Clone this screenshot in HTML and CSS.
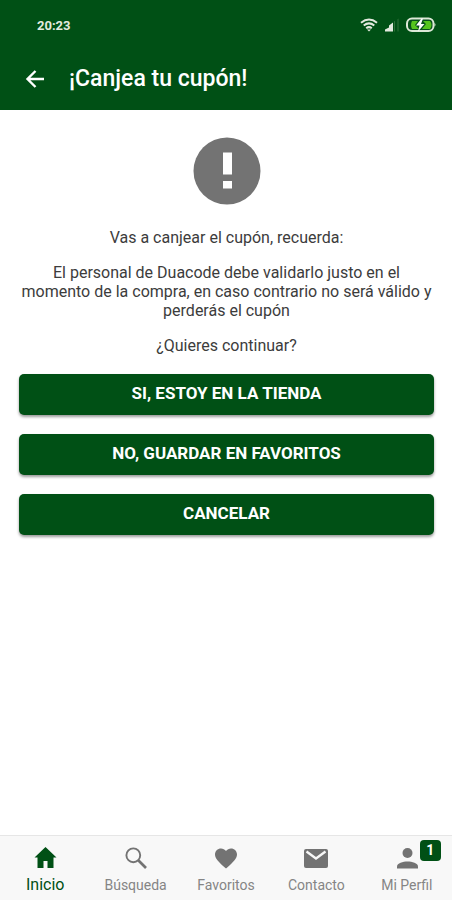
FILE: index.html
```html
<!DOCTYPE html>
<html lang="es">
<head>
<meta charset="utf-8">
<meta name="viewport" content="width=device-width, initial-scale=1">
<title>¡Canjea tu cupón!</title>
<link rel="stylesheet" href="styles.css">
</head>
<body>
<div class="app">
  <header class="header">
    <div class="status">
      <span class="clock">20:23</span>
      <div class="indicators">
        <svg width="18" height="14" viewBox="0 0 18 14" fill="none" stroke="#e3eadf" stroke-width="2" aria-hidden="true">
          <path d="M1 4.700Q9-1.700 17 4.700M3.700 7.500Q9 3.300 14.300 7.500M6.200 10.200Q9 8 11.800 10.200"/>
          <path d="M7 11.500h4l-2 2z" fill="#e3eadf" stroke="none"/>
        </svg>
        <svg width="14" height="14" viewBox="0 0 14 14" aria-hidden="true">
          <path d="M0 13.500v-2l4-2V7.500l4-3v9z" fill="#e3eadf"/>
          <path d="M9 13.500V3.500l1-.8v10.800zM12.500 13.500V1.200l1-.8v13.100z" fill="#2f703b"/>
        </svg>
        <svg width="30" height="16" viewBox="0 0 30 16" aria-hidden="true">
          <rect x="1" y="1.500" width="26.500" height="12.500" rx="5" fill="#07501a" stroke="#dce8d7" stroke-width="2"/>
          <path d="M28.500 6q2 1.700 0 3.500z" fill="#dce8d7"/>
          <path d="M6 4h6l-3 4 4 4H6q-2-4 0-8zM17 4h7q3 4 0 8h-8l4-5z" fill="#55c51d"/>
          <path d="M15.500 1.500L10 8.500h3.500L12 14.500l6.500-7.500H15l2-5.500z" fill="#fff"/>
        </svg>
      </div>
    </div>
    <div class="toolbar">
      <button class="back" type="button" aria-label="Volver">
        <svg width="20" height="20" viewBox="0 0 20 20" fill="none" stroke="#fff" stroke-width="2.400" aria-hidden="true"><path d="M19 10H3M10.500 2L2.500 10l8 8"/></svg>
      </button>
      <h1 class="title">¡Canjea tu cupón!</h1>
    </div>
  </header>

  <main class="content">
    <svg class="alert" width="68" height="68" viewBox="0 0 68 68" aria-hidden="true">
      <circle cx="34" cy="34" r="33.500" fill="#737373"/>
      <path d="M30 15.500h9v22h-9zM30 44h9v7.500h-9z" fill="#fff"/>
    </svg>
    <p>Vas a canjear el cupón, recuerda:</p>
    <p>El personal de Duacode debe validarlo justo en el momento de la compra, en caso contrario no será válido y perderás el cupón</p>
    <p>¿Quieres continuar?</p>
    <div class="actions">
      <button class="action" type="button">SI, ESTOY EN LA TIENDA</button>
      <button class="action" type="button">NO, GUARDAR EN FAVORITOS</button>
      <button class="action" type="button">CANCELAR</button>
    </div>
  </main>

  <nav class="tabs">
    <a class="tab active" href="#inicio">
      <svg class="icon" viewBox="0 0 24 24" aria-hidden="true"><path d="M12.500 1L1.500 11.500h3V22h6v-7h4v7h6V11.500h3z"/></svg>
      <span>Inicio</span>
    </a>
    <a class="tab" href="#busqueda">
      <svg class="icon" viewBox="0 0 24 24" aria-hidden="true"><g fill="none" stroke="currentColor"><circle cx="9.300" cy="9.300" r="6.900" stroke-width="1.900"/><path d="M14 14l8 8" stroke-width="2.600"/></g></svg>
      <span>Búsqueda</span>
    </a>
    <a class="tab" href="#favoritos">
      <svg class="icon" viewBox="0 0 24 24" aria-hidden="true"><path d="M12 22.500L10.500 21.200C5 16.200 1 12.800 1 8.500c0-3.400 2.600-6 6-6 1.900 0 3.800.9 5 2.400C13.200 3.400 15.100 2.500 17 2.500c3.400 0 6 2.600 6 6 0 4.300-4 7.700-9.500 12.700z"/></svg>
      <span>Favoritos</span>
    </a>
    <a class="tab" href="#contacto">
      <svg class="icon wide" viewBox="0 0 26 24" aria-hidden="true"><path d="M3 3h20q2 0 2 2v15q0 2-2 2H3q-2 0-2-2V5q0-2 2-2z"/><path d="M3.500 5.500L13 12.500l9.500-7" fill="none" stroke="#f8f8f8" stroke-width="2.300"/></svg>
      <span>Contacto</span>
    </a>
    <a class="tab" href="#perfil">
      <span class="profile">
        <svg class="icon" viewBox="0 0 24 24" aria-hidden="true"><circle cx="12.500" cy="7" r="5"/><path d="M2 22.500v-2C2 17 8 15.500 12.500 15.500S23 17 23 20.500v2z"/></svg>
        <span class="badge">1</span>
      </span>
      <span>Mi Perfil</span>
    </a>
  </nav>
</div>
</body>
</html>
```
FILE: styles.css
```css
* {
  box-sizing: border-box;
}

body {
  margin: 0;
  background: #fff;
  color: #3c3c3c;
  font-family: Roboto, "Liberation Sans", sans-serif;
  font-size: 16px;
  line-height: 19px;
}

button {
  font: inherit;
  border: 0;
  cursor: pointer;
}

.app {
  display: flex;
  flex-direction: column;
  min-height: 100vh;
}

.header {
  background: #005015;
  color: #fff;
}

.status {
  display: flex;
  align-items: center;
  justify-content: space-between;
  height: 50px;
  padding: 0 16px 0 37px;
}

.clock {
  color: #e3eadf;
  font-size: 13px;
  font-weight: 700;
}

.indicators {
  display: flex;
  align-items: center;
  gap: 7px;
}

.toolbar {
  display: flex;
  align-items: center;
  gap: 24px;
  height: 60px;
  padding: 0 25px 2px;
}

.back {
  display: flex;
  padding: 0;
  background: none;
}

.title {
  margin: 0;
  font-size: 23px;
  font-weight: 500;
  line-height: 28px;
}

.content {
  flex: 1;
  padding: 27px 18px 27px 19px;
  text-align: center;
}

.alert {
  display: block;
  margin: 0 auto 23px;
}

.content p {
  margin: 0 0 16px;
}

.actions {
  display: grid;
  gap: 19px;
  margin-top: 19px;
}

.action {
  height: 41px;
  padding: 0 0 2px;
  border-radius: 5px;
  background: #005015;
  box-shadow: 0 2px 3px rgba(0, 0, 0, 0.4);
  color: #fff;
  font-size: 17px;
  font-weight: 700;
}

.tabs {
  display: grid;
  grid-template-columns: repeat(5, 1fr);
  height: 65px;
  border-top: 1px solid #e6e6e6;
  background: #f8f8f8;
}

.tab {
  display: flex;
  flex-direction: column;
  align-items: center;
  justify-content: flex-end;
  gap: 7px;
  padding-bottom: 7px;
  color: #737373;
  font-size: 14px;
  line-height: 16px;
  text-decoration: none;
}

.tab span {
  color: #858585;
}

.tab.active,
.tab.active span {
  color: #005015;
  font-size: 16px;
}

.icon {
  display: block;
  width: 24px;
  height: 24px;
  fill: currentColor;
}

.profile .icon {
  color: #737373;
}

.wide {
  width: 26px;
}

.profile {
  position: relative;
}

.tab .badge {
  position: absolute;
  top: -6px;
  left: 25px;
  width: 21px;
  height: 21px;
  border-radius: 4px;
  background: #005015;
  color: #fff;
  font-size: 14px;
  font-weight: 700;
  line-height: 21px;
  text-align: center;
}
```
